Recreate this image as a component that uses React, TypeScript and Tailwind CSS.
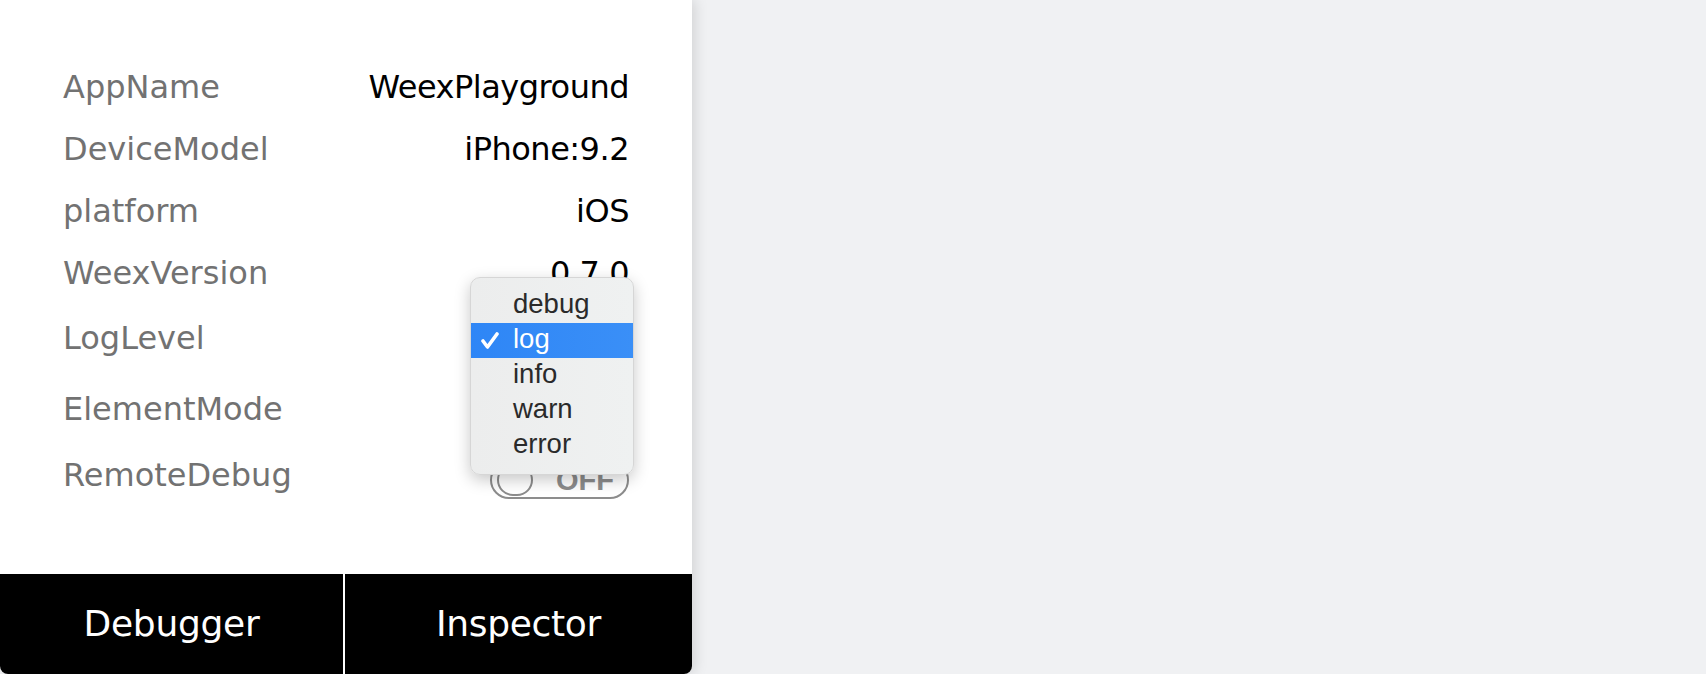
import React from 'react';

const rows = [
  { label: 'AppName', value: 'WeexPlayground', h: 'h-[62px]' },
  { label: 'DeviceModel', value: 'iPhone:9.2', h: 'h-[62px]' },
  { label: 'platform', value: 'iOS', h: 'h-[62px]' },
  { label: 'WeexVersion', value: '0.7.0', h: 'h-[62px]' },
];

const levels = ['debug', 'log', 'info', 'warn', 'error'];

// OFF switch
const Switch = () => (
  <div className="flex items-center justify-between w-[139px] h-[38px] rounded-full border-2 border-[#8c8c8c] bg-white pl-[5px] pr-[13px]">
    <div className="w-[36px] h-[32px] rounded-full border-2 border-[#8c8c8c] bg-white" />
    <span className="text-[29px] font-bold text-[#8c8c8c] leading-none font-['Liberation_Sans',sans-serif]">
      OFF
    </span>
  </div>
);

const Check = () => (
  <svg width="18" height="17" viewBox="0 0 18 17" fill="none">
    <path d="M2 9 L6.5 15 L16 2" stroke="white" strokeWidth="3.6" strokeLinecap="round" strokeLinejoin="round" />
  </svg>
);

export default function App() {
  return (
    <div className="h-[674px] w-full bg-[#f0f1f3] flex overflow-hidden">
      <div className="relative w-[692px] h-full bg-white rounded-b-[8px] shadow-[3px_0_14px_rgba(0,0,0,0.13)] flex flex-col font-['DejaVu_Sans',sans-serif]">
        <div className="flex-1 flex flex-col pt-[56px] px-[63px]">
          {rows.map((r) => (
            <div key={r.label} className={`flex items-center justify-between ${r.h}`}>
              <span className="text-[32px] text-[#727272]">{r.label}</span>
              <span className="text-[32px] text-black tracking-[-0.5px]">{r.value}</span>
            </div>
          ))}
          <div className="flex items-center h-[68px]">
            <span className="text-[32px] text-[#727272]">LogLevel</span>
          </div>
          <div className="flex items-center h-[74px]">
            <span className="text-[32px] text-[#727272]">ElementMode</span>
          </div>
          <div className="flex items-center justify-between h-[58px]">
            <span className="text-[32px] text-[#727272]">RemoteDebug</span>
            <div className="mt-[10px]">
              <Switch />
            </div>
          </div>
        </div>

        <div className="h-[100px] flex bg-black rounded-b-[8px] text-white text-[36px] tracking-[-0.3px]">
          <div className="w-[343px] flex items-center justify-center">Debugger</div>
          <div className="w-[2px] bg-white" />
          <div className="flex-1 flex items-center justify-center">Inspector</div>
        </div>

        <div className="absolute left-[470px] top-[277px] w-[164px] py-[10px] pb-[11px] rounded-[10px] bg-gradient-to-r from-[#eceded] to-[#eff1f1] border border-[#d6d6d6] shadow-[0_5px_16px_rgba(0,0,0,0.22)] font-['Liberation_Sans',sans-serif]">
          {levels.map((l) => (
            <div
              key={l}
              className={`relative h-[35px] flex items-center pl-[42px] pb-[3px] text-[27.5px] leading-none ${
                l === 'log' ? 'bg-gradient-to-r from-[#2e86f6] to-[#3a8ff7] text-white' : 'text-[#2a2a2a]'
              }`}
            >
              {l === 'log' && (
                <span className="absolute left-[10px] top-[9px]">
                  <Check />
                </span>
              )}
              {l}
            </div>
          ))}
        </div>
      </div>
    </div>
  );
}
